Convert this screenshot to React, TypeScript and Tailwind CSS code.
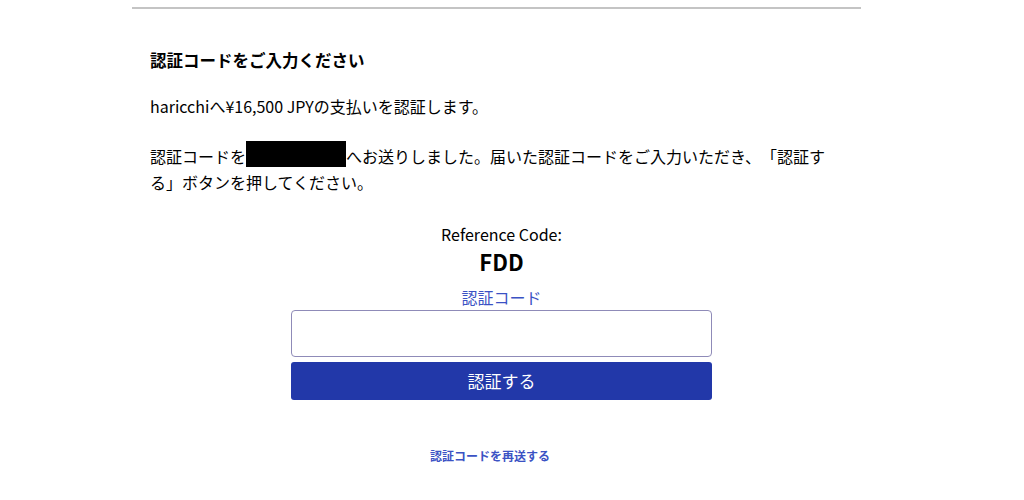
import React from 'react';

const font = { fontFamily: '"Noto Sans CJK JP", "DejaVu Sans", sans-serif' };

export default function App() {
    return (
        <div className="min-h-[500px] bg-white text-black [text-spacing-trim:space-all]" style={font}>
            <div className="ml-[132px] w-[729px] border-t-2 border-[#c4c4c4] mt-[7px]">
                <div className="pl-[18px] pr-[8px] pt-[38px]">
                    <h1 className="text-[16.5px] font-bold leading-[26px]">認証コードをご入力ください</h1>
                    <p className="mt-[20px] text-[16px] leading-[26px]">haricchiへ¥16,500 JPYの支払いを認証します。</p>
                    <p className="mt-[24px] text-[16px] leading-[26px]">
                        認証コードを<span className="inline-block w-[100px] h-[26px] bg-black align-top -mt-[2px]"></span>へお送りしました。届いた認証コードをご入力いただき、「認証する」ボタンを押してください。
                    </p>

                    {/* reference code + form */}
                    <div className="mt-[28px] flex flex-col items-center">
                        <div className="text-[16px] leading-[22px]">Reference Code:</div>
                        <div className="mt-[2px] text-[22px] font-bold leading-[28px]">FDD</div>
                        <label className="mt-[11px] text-[16px] leading-[22px] text-[#3b52c4]">認証コード</label>
                        <input
                            type="text"
                            className="mt-[2px] w-[421px] h-[47px] rounded-[4px] border border-[#8f8bb8] bg-white px-3 outline-none"
                        />
                        <button className="mt-[5px] w-[421px] h-[38px] rounded-[3px] bg-[#2238a9] text-white text-[17px]">
                            認証する
                        </button>
                        <a href="#" className="mt-[47px] mr-[23px] text-[12px] font-bold text-[#3b52c4] leading-[18px]">
                            認証コードを再送する
                        </a>
                    </div>
                </div>
            </div>
        </div>
    );
}
